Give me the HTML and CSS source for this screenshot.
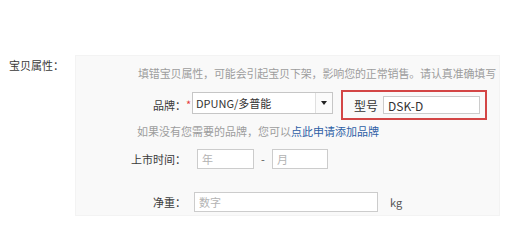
FILE: index.html
```html
<!DOCTYPE html>
<html lang="zh-CN">
<head>
<meta charset="utf-8">
<title>宝贝属性</title>
<link rel="stylesheet" href="styles.css">
</head>
<body>
<div class="section">
  <div class="section-label">宝贝属性：</div>
  <div class="panel">
    <div class="hint">填错宝贝属性，可能会引起宝贝下架，影响您的正常销售。请认真准确填写</div>
    <div class="row row-brand">
      <span class="label">品牌：</span>
      <span class="required">*</span>
      <div class="select">
        <span class="select-value">DPUNG/多普能</span>
        <span class="select-btn"><span class="arrow"></span></span>
      </div>
      <div class="model-box">
        <span class="model-label">型号</span>
        <input class="input input-model" type="text" value="DSK-D">
      </div>
    </div>
    <div class="help">如果没有您需要的品牌，您可以<a class="link" href="#">点此申请添加品牌</a></div>
    <div class="row row-date">
      <span class="label">上市时间：</span>
      <input class="input input-year" type="text" placeholder="年">
      <span class="dash">-</span>
      <input class="input input-month" type="text" placeholder="月">
    </div>
    <div class="row row-weight">
      <span class="label">净重：</span>
      <input class="input input-weight" type="text" placeholder="数字">
      <span class="unit">kg</span>
    </div>
  </div>
</div>
</body>
</html>
```
FILE: styles.css
```css
html, body {
  margin: 0;
  padding: 0;
  background: #ffffff;
}
body {
  font-family: "Noto Sans CJK SC", "Noto Sans", "Liberation Sans", sans-serif;
  font-size: 11px;
  color: #3a3a3a;
}
.section {
  display: flex;
  align-items: flex-start;
  padding: 55px 0 0 9px;
}
.section-label {
  width: 66px;
  line-height: 20px;
  color: #3a3a3a;
}
.panel {
  width: 423px;
  height: 152px;
  background: #f9f9f9;
  border: 1px solid #f3f3f3;
  display: flex;
  flex-direction: column;
  padding-top: 7px;
  box-sizing: content-box;
}
.panel > * {
  flex: none;
}
.hint {
  line-height: 20px;
  padding-left: 62px;
  color: #9d9d9d;
  white-space: nowrap;
  letter-spacing: -0.15px;
}
.row {
  display: flex;
  align-items: center;
}
.label {
  width: 110px;
  text-align: right;
  white-space: nowrap;
  color: #3a3a3a;
  flex: none;
}
.row-brand {
  height: 30px;
  margin-top: 7px;
}
.required {
  width: 6px;
  color: #e5393c;
  font-size: 11px;
  line-height: 11px;
  margin-bottom: 2px;
}
.select {
  width: 141px;
  height: 22px;
  box-sizing: border-box;
  background: #ffffff;
  border: 1px solid #c6c6c6;
  display: flex;
  align-items: center;
  margin-bottom: 4px;
}
.select-value {
  flex: 1;
  padding-left: 3px;
  color: #333333;
  white-space: nowrap;
}
.select-btn {
  width: 16px;
  height: 20px;
  border-left: 1px solid #e0e0e0;
  background: #fbfbfb;
  display: flex;
  align-items: center;
  justify-content: center;
}
.arrow {
  width: 0;
  height: 0;
  border-left: 3px solid transparent;
  border-right: 3px solid transparent;
  border-top: 4px solid #222222;
}
.model-box {
  margin-left: 8px;
  width: 146px;
  height: 30px;
  box-sizing: border-box;
  border: 2px solid #d34545;
  display: flex;
  align-items: center;
  padding-left: 11px;
}
.model-label {
  font-size: 12px;
  color: #333333;
  width: 29px;
  flex: none;
}
.input {
  box-sizing: border-box;
  height: 20px;
  border: 1px solid #cccccc;
  background: #ffffff;
  font-family: "Noto Sans CJK SC", "Noto Sans", "Liberation Sans", sans-serif;
  font-size: 11px;
  color: #333333;
  padding: 0 4px;
  margin: 0;
  outline: none;
}
.input::placeholder {
  color: #b3b3b3;
}
.input-model {
  width: 97px;
  height: 18px;
  font-size: 12px;
}
.help {
  margin-top: 1px;
  line-height: 20px;
  padding-left: 61px;
  color: #9d9d9d;
  white-space: nowrap;
}
.link {
  color: #2f5fa6;
  text-decoration: none;
}
.row-date {
  height: 20px;
  margin-top: 8px;
}
.input-year {
  margin-left: 11px;
  width: 57px;
}
.dash {
  width: 18px;
  text-align: center;
  color: #555555;
}
.input-month {
  width: 56px;
}
.row-weight {
  height: 20px;
  margin-top: 23px;
}
.input-weight {
  margin-left: 8px;
  width: 184px;
}
.unit {
  margin-left: 12px;
  color: #555555;
}
```
